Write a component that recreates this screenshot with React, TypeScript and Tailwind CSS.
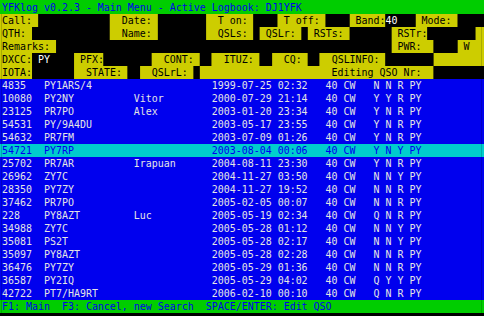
type Seg = [string, string];

// terminal palette (xterm-ish)
const Y = "bg-[#cdcd00] text-black";
const K = "bg-black text-white";
const B = "bg-[#0000ee] text-[#e5e5e5]";
const C = "bg-[#00cdcd] text-[#0000ee]";
const G = "bg-[#00cd00] text-[#0000ee]";

const sp = (n: number) => " ".repeat(n);

const header: Seg[][] = [
  [
    ["Call: ", Y], [sp(12), K], ["  Date: ", Y], [sp(8), K], ["  T on: ", Y], [sp(4), K],
    [" T off: ", Y], [sp(4), K], [" Band:", Y], ["40   ", K], [" Mode: ", Y], [sp(4), K],
  ],
  [
    ["QTH: ", Y], [sp(13), K], ["  Name: ", Y], [sp(8), K], ["  QSLs: ", Y], [sp(1), K],
    [" QSLr: ", Y], [sp(1), K], [" RSTs: ", Y], [sp(7), K], [" RSTr:", Y], [sp(8), K], [" ", Y],
  ],
  [["Remarks: ", Y], [sp(56), K], [" PWR:  ", Y], [sp(4), K], [" W  ", Y]],
  [
    ["DXCC:", Y], [" ", K], ["PY    ", K], [" PFX:", Y], [sp(8), K], ["  CONT: ", Y], [sp(2), K],
    ["  ITUZ: ", Y], [sp(2), K], ["  CQ: ", Y], [sp(2), K], ["  QSLINFO: ", Y], [sp(8), K], [sp(8), Y],
  ],
  [
    ["IOTA:", Y], [sp(7), K], ["  STATE: ", Y], [sp(2), K], ["  QSLrL: ", Y], [sp(1), K],
    [sp(22) + "Editing QSO Nr:  ", Y], [sp(8), K],
  ],
];

const qsos = [
  ["4835", "PY1ARS/4", "", "1999-07-25", "02:32", "N N R"],
  ["10080", "PY2NY", "Vitor", "2000-07-29", "21:14", "Y Y R"],
  ["23125", "PR7PO", "Alex", "2003-01-20", "23:34", "Y N R"],
  ["54531", "PY/9A4DU", "", "2003-05-17", "23:55", "Y N R"],
  ["54632", "PR7FM", "", "2003-07-09", "01:26", "Y N R"],
  ["54721", "PY7RP", "", "2003-08-04", "00:06", "Y N Y"],
  ["25702", "PR7AR", "Irapuan", "2004-08-11", "23:30", "Y N R"],
  ["26962", "ZY7C", "", "2004-11-27", "03:50", "N N Y"],
  ["28350", "PY7ZY", "", "2004-11-27", "19:52", "N N R"],
  ["37462", "PR7PO", "", "2005-02-05", "00:07", "N N R"],
  ["228", "PY8AZT", "Luc", "2005-05-19", "02:34", "Q N R"],
  ["34988", "ZY7C", "", "2005-05-28", "01:12", "N N Y"],
  ["35081", "PS2T", "", "2005-05-28", "02:17", "N N Y"],
  ["35097", "PY8AZT", "", "2005-05-28", "02:28", "N N R"],
  ["36476", "PY7ZY", "", "2005-05-29", "01:36", "N N R"],
  ["36587", "PY2IQ", "", "2005-05-29", "04:02", "Q Y Y"],
  ["42722", "PT7/HA9RT", "", "2006-02-10", "00:10", "Q N R"],
];

const selected = "54721";

function Row({ segs, className = "h-[13px]" }: { segs: Seg[]; className?: string }) {
  const first = segs[0][1];
  const last = segs[segs.length - 1][1];
  return (
    <div className={`flex ${className}`}>
      <div className={`w-[2.24px] shrink-0 ${first}`} />
      {segs.map(([t, c], i) => (
        <span key={i} className={`shrink-0 whitespace-pre leading-[13px] ${c}`}>
          {t}
        </span>
      ))}
      <div className={`flex-1 ${last}`} />
    </div>
  );
}

export default function App() {
  return (
    <div className="w-[484px] h-[316px] overflow-hidden bg-black font-['DejaVu_Sans_Mono',monospace] text-[11.17px]">
      {/* cells are 6x13 px: the font is squeezed a little to a narrow terminal face */}
      <div className="w-[542.5px] origin-top-left scale-x-[0.8922]">
        <Row
          segs={[["YFKlog v0.2.3 - Main Menu - Active Logbook: DJ1YFK".padEnd(80), G]]}
          className="h-[14px] pt-px bg-[#00cd00]"
        />
        {header.map((segs, i) => (
          <Row key={i} segs={segs} />
        ))}
        {qsos.map(([nr, call, name, date, time, qsl]) => {
          const line =
            `${nr.padEnd(7)}${call.padEnd(15)}${name.padEnd(13)}${date} ${time}   40 CW   ${qsl} PY`.padEnd(80);
          return <Row key={nr} segs={[[line, nr === selected ? C : B]]} />;
        })}
        <Row segs={[["F1: Main  F3: Cancel, new Search  SPACE/ENTER: Edit QSO".padEnd(80), G]]} />
      </div>
    </div>
  );
}
